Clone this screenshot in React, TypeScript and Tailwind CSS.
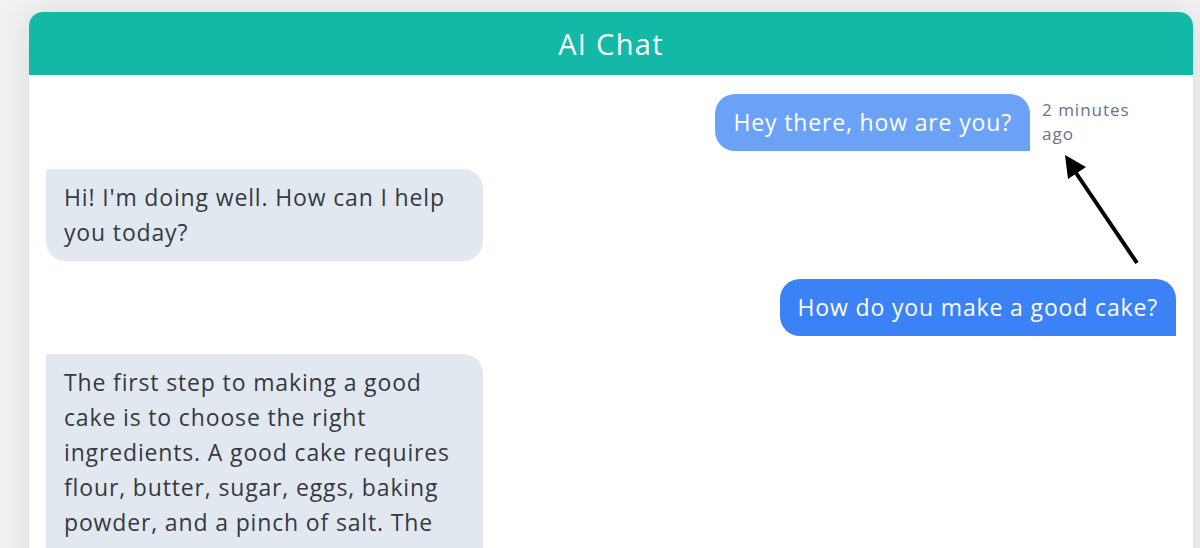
import React from "react";

const font = { fontFamily: '"Open Sans", "Noto Sans", sans-serif' };

function UserBubble({ text, light }: { text: string; light?: boolean }) {
  return (
    <div
      className={`rounded-[20px] rounded-br-none px-[18px] py-[11px] text-[23px] leading-[35px] tracking-[0.85px] text-white ${
        light ? "bg-[#6ca1f8]" : "bg-[#3b82f6]"
      }`}
    >
      {text}
    </div>
  );
}

function BotBubble({ text }: { text: string }) {
  return (
    <div className="max-w-[437px] rounded-[20px] rounded-tl-none bg-[#e2e8f0] px-[18px] py-[11px] text-[23px] leading-[35px] tracking-[0.85px] text-[#36393f]">
      {text}
    </div>
  );
}

export default function App() {
  return (
    <div
      className="relative h-[548px] overflow-hidden bg-[#f2f2f2] pt-[12px] pl-[29px] pr-[7px]"
      style={font}
    >
      <div className="h-[600px] rounded-t-[14px] bg-white shadow-[0_0_40px_rgba(0,0,0,0.1)]">
        <div className="flex h-[63px] items-center justify-center rounded-t-[14px] bg-[#14b8a6] text-[29px] tracking-[1.3px] text-white">
          AI Chat
        </div>
        <div className="flex flex-col gap-[18px] px-[17px] pt-[19px]">
          <div className="flex items-start justify-end gap-[12px]">
            <UserBubble text="Hey there, how are you?" light />
            <div className="mr-[38px] w-[96px] pt-[4px] text-[17px] leading-[24px] tracking-[1px] text-[#64748b]">
              2 minutes ago
            </div>
          </div>
          <div className="flex">
            <BotBubble text="Hi! I'm doing well. How can I help you today?" />
          </div>
          <div className="flex justify-end">
            <UserBubble text="How do you make a good cake?" />
          </div>
          <div className="flex">
            <BotBubble text="The first step to making a good cake is to choose the right ingredients. A good cake requires flour, butter, sugar, eggs, baking powder, and a pinch of salt. The most important thing is to mix them well." />
          </div>
        </div>
      </div>
      <svg
        className="pointer-events-none absolute left-0 top-0"
        width="1200"
        height="548"
        viewBox="0 0 1200 548"
      >
        <line x1="1137" y1="263" x2="1074" y2="170" stroke="#000" strokeWidth="4" strokeLinecap="butt" />
        <polygon points="1065,155 1068,179 1086,167" fill="#000" />
      </svg>
    </div>
  );
}
